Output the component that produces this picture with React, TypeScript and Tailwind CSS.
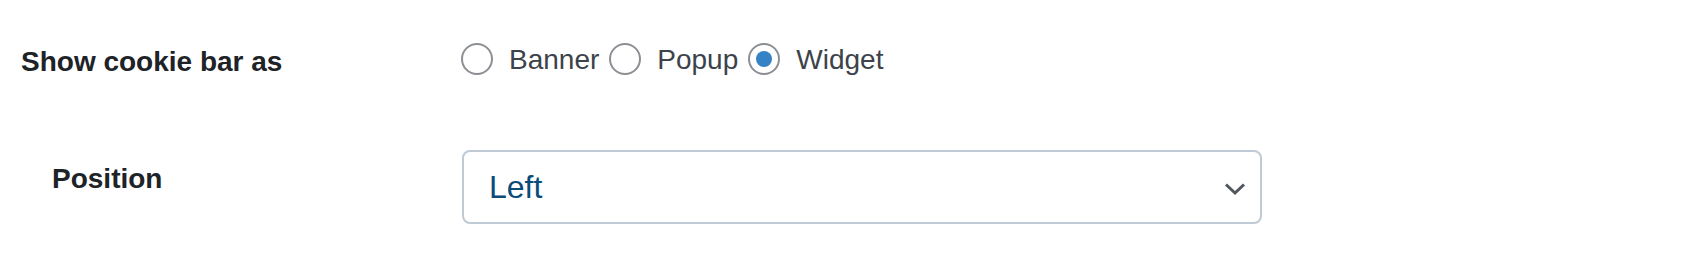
import React from "react";

const font = { fontFamily: '"Liberation Sans", Arial, sans-serif' };

function Radio({ checked }: { checked?: boolean }) {
  return (
    <span className="mb-[3px] flex h-[32px] w-[32px] shrink-0 items-center justify-center rounded-full border-2 border-[#8c8f94] bg-white">
      {checked && <span className="h-[16px] w-[16px] rounded-full bg-[#3582c4]" />}
    </span>
  );
}

export default function App() {
  const options = [
    { label: "Banner", checked: false },
    { label: "Popup", checked: false },
    { label: "Widget", checked: true },
  ];
  return (
    <div className="h-[278px] w-[1700px] bg-white" style={font}>
      <div className="flex pt-[40px]">
        <div className="mt-[2px] w-[461px] shrink-0 pl-[21px] text-[28px] font-bold leading-[40px] text-[#1d2327]">
          Show cookie bar as
        </div>
        <div className="flex h-[40px] items-center">
          {options.map((o, i) => (
            <label key={o.label} className={`flex items-center ${i > 0 ? "ml-[10px]" : ""}`}>
              <Radio checked={o.checked} />
              <span className="ml-[16px] text-[28px] leading-[40px] text-[#3c434a]">{o.label}</span>
            </label>
          ))}
        </div>
      </div>
      <div className="mt-[68px] flex items-start">
        <div className="mt-[9px] w-[462px] shrink-0 pl-[52px] text-[28px] font-bold leading-[40px] text-[#1d2327]">
          Position
        </div>
        <div className="flex h-[74px] w-[800px] items-center justify-between rounded-[8px] border-2 border-[#bfcad6] bg-white pl-[25px] pr-[14px]">
          <span className="text-[32px] leading-[40px] text-[#0a4b78]">Left</span>
          <svg width="22" height="14" viewBox="0 0 22 14" className="mt-[3px]">
            <path d="M2 2.5 L11 11 L20 2.5" fill="none" stroke="#50575e" strokeWidth="3" strokeLinecap="butt" strokeLinejoin="miter" />
          </svg>
        </div>
      </div>
    </div>
  );
}
